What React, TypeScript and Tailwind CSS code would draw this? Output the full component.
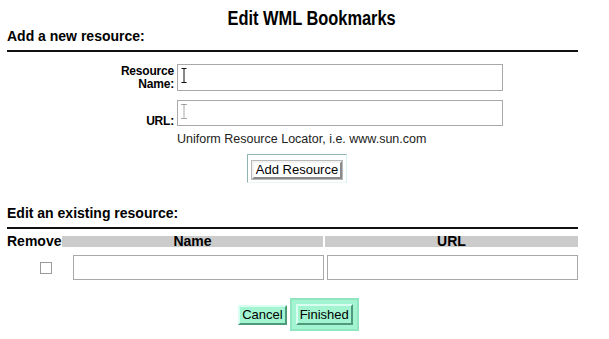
import React from "react";

const font = { fontFamily: '"Liberation Sans", Arial, sans-serif' };

function IBeam({ dotted }: { dotted?: boolean }) {
  return (
    <svg width="6" height="15" viewBox="0 0 6 15" className="absolute left-[3px] top-[3px]">
      <path
        d="M0.5 0.5 H5.5 M3 0.5 V14.5 M0.5 14.5 H5.5"
        stroke={dotted ? "#555" : "#111"}
        strokeWidth="1"
        strokeDasharray={dotted ? "1 1" : undefined}
        fill="none"
      />
    </svg>
  );
}

function TextBox({ className, cursor }: { className: string; cursor?: "solid" | "dotted" }) {
  return (
    <div className={`relative border border-[#a9a9a9] bg-white ${className}`}>
      {cursor && <IBeam dotted={cursor === "dotted"} />}
    </div>
  );
}

export default function App() {
  return (
    <div className="w-[609px] h-[339px] bg-white text-black overflow-hidden" style={font}>
      <div className="ml-[7px] w-[571px]">
        <h1 className="flex justify-center pt-[7px] pl-[38px]">
          <span className="inline-block text-[20px] font-bold leading-[22px] scale-x-[0.82]">Edit WML Bookmarks</span>
        </h1>
        <div className="text-[14px] font-bold leading-[14px]">Add a new resource:</div>
        <div className="h-[2px] bg-[#111] mt-[7px]" />

        <div className="grid grid-cols-[167px_326px] gap-x-[3px] mt-[12px]">
          <div className="text-[12px] font-bold leading-[13px] text-right pt-[1px] tracking-[-0.2px]">
            Resource<br />Name:
          </div>
          <TextBox className="h-[27px]" cursor="solid" />
          <div className="text-[12px] font-bold leading-[13px] text-right pt-[15px] mt-[9px] tracking-[-0.2px]">URL:</div>
          <TextBox className="h-[26px] mt-[9px]" cursor="dotted" />
          <div />
          <div className="text-[12.5px] leading-[13px] mt-[5px] text-[#222]">Uniform Resource Locator, i.e. www.sun.com</div>
        </div>

        <div className="flex justify-center mt-[8px] pl-[9px]">
          <div className="flex border border-[#8fb5b0] border-b-[#e8f8f4] border-r-[#d8f0f0] px-[4px] pt-[6px] pb-[3px]">
            <button className="h-[18px] px-[2px] bg-white text-[13px] leading-[14px] border-2 border-t-[#f2f2f2] border-l-[#f2f2f2] border-b-[#8a8a8a] border-r-[#8a8a8a] outline outline-1 outline-[#b8b8b8]">
              Add Resource
            </button>
          </div>
        </div>

        <div className="text-[14px] font-bold leading-[14px] mt-[23px]">Edit an existing resource:</div>
        <div className="h-[2px] bg-[#111] mt-[7px]" />

        <div className="grid grid-cols-[53px_261px_253px] gap-x-[2px] mt-[7px]">
          <div className="text-[14px] font-bold leading-[11px] h-[11px]">Remove</div>
          <div className="bg-[#cbcbcb] h-[11px] text-[14px] font-bold leading-[11px] text-center">Name</div>
          <div className="bg-[#cbcbcb] h-[11px] text-[14px] font-bold leading-[11px] text-center">URL</div>
        </div>

        <div className="grid grid-cols-[63px_251px_251px] gap-x-[3px] mt-[8px] items-center">
          <div className="flex justify-center pl-[14px]">
            <div className="w-[12px] h-[12px] border border-[#9a9a9a] bg-white" />
          </div>
          <TextBox className="h-[25px]" />
          <TextBox className="h-[25px]" />
        </div>

        <div className="flex justify-center items-center gap-[3px] mt-[18px] pl-[12px]">
          <button className="h-[20px] px-[2px] bg-[#a2f5d0] text-[13px] leading-[15px] border-2 border-t-[#d8fff0] border-l-[#d8fff0] border-b-[#4e9a7a] border-r-[#4e9a7a]">
            Cancel
          </button>
          <div className="flex bg-[#a2f5d0] border-2 border-[#8fe6c0] p-[4px]">
            <button className="h-[21px] px-[2px] bg-[#a2f5d0] text-[13px] leading-[15px] border-2 border-t-[#d8fff0] border-l-[#d8fff0] border-b-[#4e9a7a] border-r-[#4e9a7a]">
              Finished
            </button>
          </div>
        </div>
      </div>
    </div>
  );
}
